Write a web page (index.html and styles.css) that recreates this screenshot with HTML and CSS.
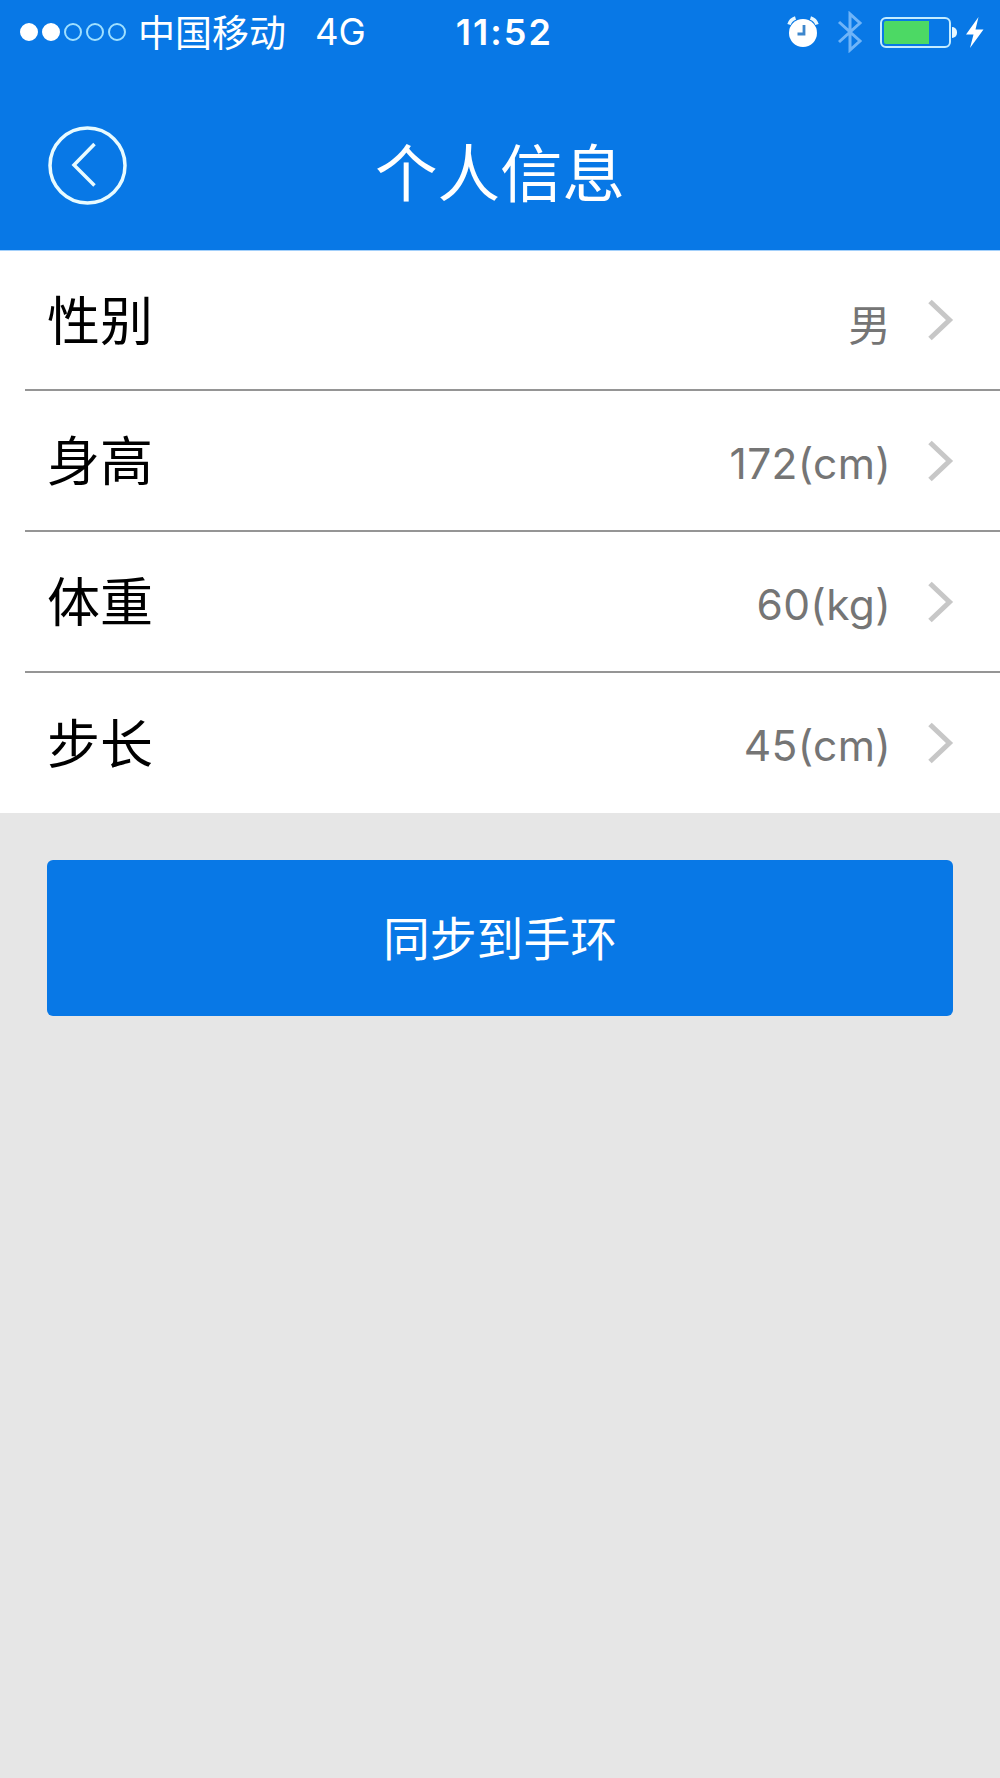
FILE: index.html
```html
<!DOCTYPE html>
<html lang="zh-CN">
<head>
    <meta charset="UTF-8">
    <meta name="viewport" content="width=device-width, initial-scale=1.0">
    <title>个人信息</title>
    <link rel="stylesheet" href="styles.css">
</head>
<body>

<header class="header">
    <div class="status-bar">
        <div class="signal">
            <span class="dot full"></span>
            <span class="dot full"></span>
            <span class="dot"></span>
            <span class="dot"></span>
            <span class="dot"></span>
        </div>
        <span class="carrier">中国移动</span>
        <span class="network">4G</span>
        <span class="time">11:52</span>
        <div class="status-icons">
            <svg class="alarm" width="32" height="32" viewBox="0 0 32 32" fill="none">
                <circle cx="16" cy="17" r="14" fill="#fff"/>
                <path d="M2 8.5Q3.500 3.500 8.500 2M30 8.500Q28.500 3.500 23.500 2" stroke="#e8f8ff" stroke-width="3.500"/>
                <path d="M17 9V18H10.500" stroke="#3c86cc" stroke-width="2.800"/>
            </svg>
            <svg class="bluetooth" width="26" height="42" viewBox="0 0 26 42" fill="none" stroke="#6fb4f8" stroke-width="3">
                <path d="M2 11L23 30L13 39V3L23 12L2 31"/>
            </svg>
            <div class="battery"><div class="level"></div></div>
            <span class="battery-cap"></span>
            <svg class="bolt" width="18" height="31" viewBox="0 0 18 31" fill="#fff">
                <path d="M12.500 0L0 17.500H7.500L4 31L17.500 12.500H9.500Z"/>
            </svg>
        </div>
    </div>
    <div class="nav-bar">
        <a class="back" href="#" aria-label="返回">
            <svg width="80" height="80" viewBox="0 0 80 80" fill="none" stroke="#e8fbff">
                <circle cx="39.500" cy="39.500" r="37.500" stroke-width="3.500"/>
                <path d="M46.500 18L26 39L46.500 59.500" stroke-width="3.500"/>
            </svg>
        </a>
        <h1 class="title">个人信息</h1>
    </div>
</header>

<ul class="list">
    <li class="row">
        <span class="label">性别</span>
        <span class="value">男</span>
        <svg class="arrow" width="26" height="42" viewBox="0 0 26 42"><path d="M2 2.500L21.500 21L2 39.500"/></svg>
    </li>
    <li class="row">
        <span class="label">身高</span>
        <span class="value">172(cm)</span>
        <svg class="arrow" width="26" height="42" viewBox="0 0 26 42"><path d="M2 2.500L21.500 21L2 39.500"/></svg>
    </li>
    <li class="row">
        <span class="label">体重</span>
        <span class="value">60(kg)</span>
        <svg class="arrow" width="26" height="42" viewBox="0 0 26 42"><path d="M2 2.500L21.500 21L2 39.500"/></svg>
    </li>
    <li class="row">
        <span class="label">步长</span>
        <span class="value">45(cm)</span>
        <svg class="arrow" width="26" height="42" viewBox="0 0 26 42"><path d="M2 2.500L21.500 21L2 39.500"/></svg>
    </li>
</ul>

<button class="sync">同步到手环</button>

</body>
</html>
```

FILE: styles.css
```css
* {
    box-sizing: border-box;
}

body {
    margin: 0;
    min-height: 100vh;
    background-color: #e6e6e6;
    font-family: Inter, "Noto Sans CJK SC", sans-serif;
}

.header {
    height: 251px;
    background-color: #0878e6;
    border-bottom: 1px solid #a3d0fb;
    color: #fff;
}

/* status bar */
.status-bar {
    display: flex;
    align-items: center;
    height: 64px;
    padding-left: 20px;
    padding-right: 16px;
}

.signal {
    display: flex;
    gap: 4px;
}

.dot {
    width: 18px;
    height: 18px;
    border: 2px solid #9fe0ff;
    border-radius: 50%;
}

.dot.full {
    background-color: #fff;
    border-color: #fff;
}

.carrier {
    margin-left: 12px;
    padding-top: 3px;
    font-size: 37px;
    line-height: 61px;
}

.network {
    margin-left: 29px;
    padding-top: 1px;
    font-size: 36.5px;
    line-height: 63px;
}

.time {
    margin-left: 90px;
    font-size: 36px;
    font-weight: 600;
    line-height: 64px;
    letter-spacing: 2px;
}

.status-icons {
    display: flex;
    align-items: center;
    margin-left: auto;
}

.bluetooth {
    margin-left: 18px;
}

.battery {
    width: 71px;
    height: 31px;
    margin-left: 17px;
    padding: 2px;
    border: 2px solid #c4ecff;
    border-radius: 6px;
}

.level {
    width: 45px;
    height: 100%;
    background-color: #4cd964;
    border-radius: 2px 0 0 2px;
}

.battery-cap {
    width: 5px;
    height: 11px;
    margin-left: 1px;
    background-color: #e8f8ff;
    border-radius: 0 5px 5px 0;
}

.bolt {
    margin-left: 9px;
}

/* title bar */
.nav-bar {
    display: grid;
    grid-template-columns: 80px 1fr 80px;
    align-items: start;
    padding: 62px 48px 0;
}

.back {
    height: 80px;
}

.title {
    margin: 0;
    padding-top: 3px;
    font-size: 62.5px;
    font-weight: 400;
    line-height: 90px;
    text-align: center;
}

/* list */
.list {
    margin: 0;
    padding: 0 0 0 25px;
    list-style: none;
    background-color: #fff;
}

.row {
    display: flex;
    align-items: center;
    height: 141px;
    padding: 0 46px 0 22px;
    border-bottom: 2px solid #959595;
}

.row:first-child {
    height: 140px;
}

.row:last-child {
    height: 140px;
    border-bottom: none;
}

.label {
    flex: 1;
    margin-bottom: 5px;
    font-size: 53px;
    color: #000;
}

.value {
    margin-top: 5px;
    font-size: 42.5px;
    font-feature-settings: "calt" 0;
    letter-spacing: 0.3px;
    color: #757575;
}

.arrow {
    margin-left: 37px;
    fill: none;
    stroke: #c7c7c7;
    stroke-width: 5;
}

/* button */
.sync {
    display: block;
    width: 906px;
    height: 156px;
    margin: 47px auto 0;
    padding: 0 0 5px;
    border: none;
    border-radius: 6px;
    background-color: #0878e6;
    color: #fff;
    font-family: inherit;
    font-size: 46.8px;
    cursor: pointer;
}
```
